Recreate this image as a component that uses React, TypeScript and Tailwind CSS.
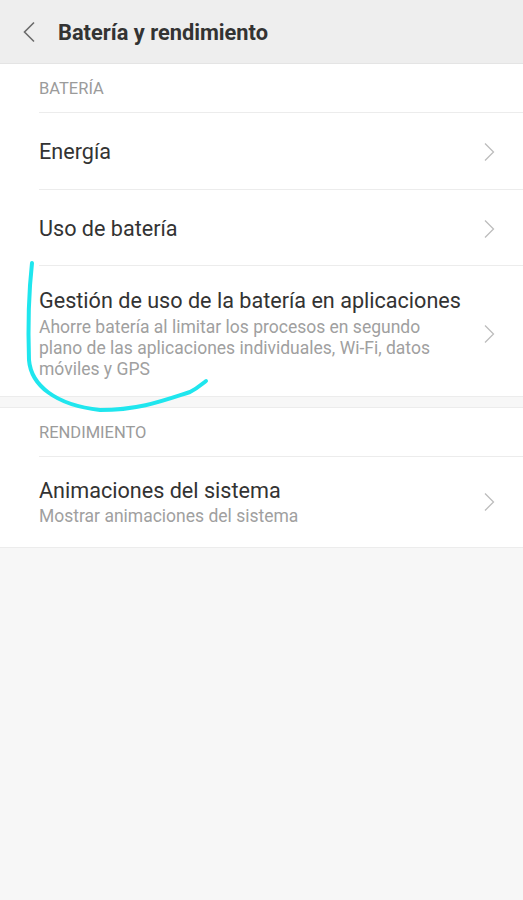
import React from "react";

const Chevron = () => (
  <svg width="12" height="20" viewBox="0 0 12 20" className="shrink-0">
    <path d="M2 1.5 L10.5 10 L2 18.5" fill="none" stroke="#bdbdbd" strokeWidth="1.3" />
  </svg>
);

export default function App() {
  return (
    <div
      className="relative w-[523px] h-[900px] bg-[#f7f7f7] overflow-hidden"
      style={{ fontFamily: "Roboto, 'Noto Sans', sans-serif" }}
    >
      {/* Header */}
      <div className="h-[64px] bg-[#eeeeee] flex items-center border-b border-[#e4e4e4]">
        <div className="w-[58px] flex items-center pl-[22px]">
          <svg width="14" height="22" viewBox="0 0 14 22">
            <path d="M12 1.5 L2.5 11 L12 20.5" fill="none" stroke="#6b6b6b" strokeWidth="1.6" />
          </svg>
        </div>
        <div className="text-[21.8px] font-bold text-[#333333] leading-none pt-[2px]">
          Batería y rendimiento
        </div>
      </div>

      {/* Section 1 */}
      <div className="bg-white border-b border-[#ececec]">
        <div className="h-[48px] flex items-center pl-[39px] text-[16.5px] text-[#9b9b9b] pt-[3px]">
          BATERÍA
        </div>
        <div className="ml-[39px] h-px bg-[#ececec]" />
        <div className="h-[76px] flex items-center pl-[39px] pr-[28px] pt-[2px]">
          <div className="flex-1 text-[21.6px] text-[#333333]">Energía</div>
          <Chevron />
        </div>
        <div className="ml-[39px] h-px bg-[#ececec]" />
        <div className="h-[75px] flex items-center pl-[39px] pr-[28px] pt-[3px]">
          <div className="flex-1 text-[21.6px] text-[#333333]">Uso de batería</div>
          <Chevron />
        </div>
        <div className="ml-[39px] h-px bg-[#ececec]" />
        <div className="flex items-center pl-[39px] pr-[28px] pt-[22px] pb-[16px]">
          <div className="flex-1">
            <div className="text-[21.6px] text-[#333333] leading-[26px] whitespace-nowrap">
              Gestión de uso de la batería en aplicaciones
            </div>
            <div className="text-[17.5px] text-[#a0a0a0] leading-[21px] mt-[3px] pr-[20px]">
              Ahorre batería al limitar los procesos en segundo plano de las aplicaciones individuales, Wi-Fi, datos móviles y GPS
            </div>
          </div>
          <Chevron />
        </div>
      </div>

      <div className="h-[10px]" />

      {/* Section 2 */}
      <div className="bg-white border-t border-b border-[#ececec]">
        <div className="h-[48px] flex items-center pl-[39px] text-[16.5px] text-[#9b9b9b] pt-[2px]">
          RENDIMIENTO
        </div>
        <div className="ml-[39px] h-px bg-[#ececec]" />
        <div className="h-[90px] flex items-center pl-[39px] pr-[28px]">
          <div className="flex-1">
            <div className="text-[21.6px] text-[#333333] leading-[26px]">Animaciones del sistema</div>
            <div className="text-[17.5px] text-[#a0a0a0] leading-[21px] mt-[2px]">
              Mostrar animaciones del sistema
            </div>
          </div>
          <Chevron />
        </div>
      </div>

      {/* Hand-drawn cyan annotation */}
      <svg className="absolute left-0 top-0 pointer-events-none" width="523" height="900">
        <path
          d="M32 263 C29 290, 28 330, 29 360 C31 385, 55 405, 100 410 C140 410, 165 400, 190 392 C198 388, 202 384, 206 381"
          fill="none"
          stroke="#1fe6ee"
          strokeWidth="4"
          strokeLinecap="round"
        />
      </svg>
    </div>
  );
}
